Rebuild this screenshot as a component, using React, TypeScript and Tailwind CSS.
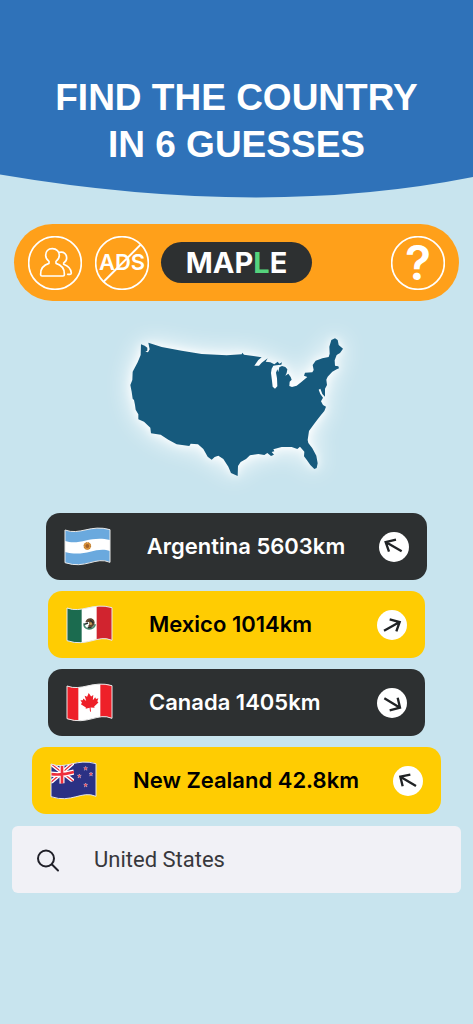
import { useState, type ReactNode } from 'react'

interface Guess {
  country: string
  distance: string
  near: boolean
  flag: ReactNode
  arrow: string
}

const FLAG_SHAPE = 'M3 9 C48 26 80 -9 138 8 V106 C95 87 65 128 3 107 Z'

function Flag({ id, children }: { id: string; children: ReactNode }) {
  return (
    <svg viewBox="0 0 141 117" className="h-[39px] w-[47px] shrink-0" role="img" aria-label={`${id} flag`}>
      <clipPath id={`flag-${id}`}>
        <path d={FLAG_SHAPE} />
      </clipPath>
      <g clipPath={`url(#flag-${id})`}>{children}</g>
      <path d={FLAG_SHAPE} fill="none" stroke="#e8e8e8" strokeWidth="3" strokeLinejoin="round" />
    </svg>
  )
}

function Argentina() {
  return (
    <Flag id="argentina">
      <rect width="141" height="117" fill="#6aa9de" />
      <path d="M0 41 C48 58 80 23 141 40 V73 C95 55 65 94 0 74 Z" fill="#fff" />
      <circle cx="70" cy="57" r="11" fill="#e39a3b" />
      <circle cx="70" cy="57" r="10" fill="none" stroke="#8d5a2b" strokeWidth="2" strokeDasharray="3 3" />
      <circle cx="70" cy="57" r="6" fill="#a2622b" />
    </Flag>
  )
}

function Mexico() {
  return (
    <Flag id="mexico">
      <rect width="141" height="117" fill="#fff" />
      <rect width="47" height="117" fill="#1b6b4f" />
      <rect x="92" width="49" height="117" fill="#d1242f" />
      <path d="M54 55 C53 74 81 79 88 58" fill="none" stroke="#4c8d72" strokeWidth="5" />
      <path d="M58 52 Q62 38 76 40 Q89 45 85 59 Q78 71 65 64 Q73 58 69 51 Z" fill="#5e4632" />
      <path d="M55 58 l11 -4 M72 45 l10 9 M65 68 h12" stroke="#252c2c" strokeWidth="4" />
      <circle cx="74" cy="56" r="4" fill="#c79a54" />
    </Flag>
  )
}

function Canada() {
  return (
    <Flag id="canada">
      <rect width="141" height="117" fill="#fff" />
      <rect width="37" height="117" fill="#ee2029" />
      <rect x="103" width="38" height="117" fill="#ee2029" />
      <path
        transform="rotate(-6 70 57)"
        d="M71 30 L77 41 L84 37 L81 53 L89 45 L91 50 L98 49 L94 57 L97 61 L83 72 L84 76 L72 74 V86 H69 V74 L57 76 L58 72 L44 61 L48 57 L44 49 L51 50 L53 45 L61 53 L58 37 L65 41 Z"
        fill="#ee2029"
      />
    </Flag>
  )
}

function Star({ x, y }: { x: number; y: number }) {
  return (
    <path
      transform={`translate(${x} ${y})`}
      d="M0 -6 L1.5 -2 L6 -2 L2.5 1 L4 6 L0 3 L-4 6 L-2.5 1 L-6 -2 L-1.5 -2 Z"
      fill="#f0303e"
      stroke="#fff"
      strokeWidth="1"
    />
  )
}

function NewZealand() {
  return (
    <Flag id="new-zealand">
      <rect width="141" height="117" fill="#2b3184" />
      <path d="M0 6 L72 62 M0 66 L72 4" stroke="#fff" strokeWidth="12" />
      <path d="M0 6 L72 62 M0 66 L72 4" stroke="#ee2f3c" strokeWidth="4" />
      <path d="M36 6 V68 M0 39 Q36 44 72 33" fill="none" stroke="#fff" strokeWidth="15" />
      <path d="M36 6 V68 M0 39 Q36 44 72 33" fill="none" stroke="#ee2f3c" strokeWidth="8" />
      <path d="M72 0 H141 V117 H0 V66 Q36 74 72 60 Z" fill="#2b3184" />
      <Star x={107} y={22} />
      <Star x={88} y={45} />
      <Star x={123} y={39} />
      <Star x={107} y={72} />
    </Flag>
  )
}

function Ring({ slashed = false }: { slashed?: boolean }) {
  return (
    <svg viewBox="0 0 162 162" className="absolute inset-0 size-full" fill="none" stroke="#fff" aria-hidden="true">
      <circle cx="81" cy="81" r="79" strokeWidth="5" />
      {slashed && <path d="M25 138 L137 26" strokeWidth="6" />}
    </svg>
  )
}

const GUESSES: Guess[] = [
  { country: 'Argentina', distance: '5603km', near: false, flag: <Argentina />, arrow: 'M23 13 L-25 -15 M6 -22 L-25 -15 L-15 14' },
  { country: 'Mexico', distance: '1014km', near: true, flag: <Mexico />, arrow: 'M-24 17 L23 -9 M-7 -17 L23 -9 L13 19' },
  { country: 'Canada', distance: '1405km', near: false, flag: <Canada />, arrow: 'M-23 -14 L24 14 M17 -16 L24 14 L-7 22' },
  { country: 'New Zealand', distance: '42.8km', near: true, flag: <NewZealand />, arrow: 'M24 15 L-23 -13 M7 -19 L-23 -13 L-16 16' },
]

const MAINLAND =
  'M78 58 L89 62 L97 68 L97 77 L91 80 L99 82 L104 73 L100 53 L140 66 L200 77 L260 87 L335 91 L380 88 L382 83 L387 89 L415 93 L440 97 L430 105 L418 122 L432 122 L440 113 L458 100 L452 110 L466 112 L478 118 L488 110 L493 116 L501 112 L499 119 L484 121 L475 122 L470 131 L468 144 L471 168 L473 185 L480 191 L487 184 L486 160 L483 143 L487 133 L490 141 L493 127 L501 123 L511 126 L517 133 L515 144 L511 152 L520 146 L527 156 L530 164 L524 170 L523 183 L531 186 L545 182 L560 170 L577 156 L567 152 L570 143 L592 142 L596 135 L593 120 L602 107 L622 100 L641 96 L644 86 L643 65 L649 45 L660 40 L668 45 L671 60 L684 71 L675 84 L665 90 L659 106 L660 122 L670 124 L672 130 L665 133 L652 140 L638 155 L634 164 L636 180 L630 191 L630 215 L622 207 L616 191 L611 194 L616 207 L624 218 L618 229 L624 240 L633 245 L628 258 L618 270 L608 283 L595 300 L582 318 L578 345 L580 354 L592 370 L604 392 L608 415 L605 429 L598 432 L586 420 L576 406 L567 394 L568 380 L555 365 L547 372 L530 366 L500 366 L475 373 L478 379 L470 381 L477 389 L468 393 L457 384 L448 390 L430 387 L405 391 L393 402 L377 411 L369 423 L368 453 L348 444 L340 425 L325 402 L310 392 L299 396 L290 404 L278 395 L265 372 L249 358 L227 356 L223 363 L185 358 L160 344 L137 329 L108 325 L106 308 L87 290 L70 283 L70 268 L62 254 L60 240 L57 225 L53 221 L50 200 L46 180 L52 165 L53 140 L68 112 L77 90 Z'

export default function App() {
  const [query, setQuery] = useState('United States')

  return (
    <div className="min-h-screen bg-[#c8e4ee] font-['Inter',sans-serif]">
      <header>
        <div className="bg-[#2f72b9] px-4 pt-[74px] pb-1.5">
          <h1 className="text-center font-['Liberation_Sans',sans-serif] text-[37px] leading-[47px] font-bold text-white">
            FIND THE COUNTRY
            <br />
            IN 6 GUESSES
          </h1>
        </div>
        <svg viewBox="0 0 473 24" preserveAspectRatio="none" className="block h-6 w-full" aria-hidden="true">
          <path d="M0 -1 V0.5 Q262 45 473 3 V-1 Z" fill="#2f72b9" />
        </svg>
      </header>

      <main>
        <nav className="mx-3.5 mt-[26px] flex h-[77px] items-center rounded-full bg-[#ffa01a] px-3.5">
          <button aria-label="Players" className="relative size-[54px] shrink-0 rounded-full">
            <Ring />
            <svg viewBox="0 0 162 162" className="size-full" fill="none" stroke="#fff" strokeWidth="5" strokeLinejoin="round" strokeLinecap="round">
              <path d="M73 38 C60 38 53 47 53 58 C53 66 57 72 63 76 V82 C47 87 38 96 38 113 V117 Q38 120 42 120 H105 Q109 120 109 117 V113 C109 96 100 87 84 82 V76 C90 72 94 66 94 58 C94 47 86 38 73 38 Z" />
              <path d="M94 49 C108 46 116 54 116 66 C116 73 112 78 107 81 V85 C120 90 129 98 130 111 Q130 115 126 115 H119" />
            </svg>
          </button>
          <button
            aria-label="Remove ads"
            className="relative ml-[13px] flex size-[54px] shrink-0 items-center justify-center rounded-full text-[22px] font-semibold text-white"
          >
            ADS
            <Ring slashed />
          </button>
          <div className="ml-3 flex h-[41px] w-[151px] items-center justify-center rounded-full bg-[#2d3031] text-[29px] font-bold text-white">
            MAP<span className="text-[#55d37d]">L</span>E
          </div>
          <button
            aria-label="Help"
            className="relative ml-auto flex size-[54px] shrink-0 items-center justify-center rounded-full text-5xl font-semibold text-white"
          >
            ?
            <Ring />
          </button>
        </nav>

        <svg
          viewBox="0 0 729 495"
          className="mx-auto mt-6 block w-[243px] overflow-visible drop-shadow-[0_0_12px_#fff]"
          role="img"
          aria-label="Country outline"
        >
          <path d={MAINLAND} fill="#165a7d" className="drop-shadow-[0_0_12px_#fff]" />
        </svg>

        <ul className="mt-[23px] flex flex-col items-center gap-[11px]">
          {GUESSES.map((guess) => (
            <li
              key={guess.country}
              className={`flex h-[67px] w-fit items-center rounded-[14px] px-[18px] ${
                guess.near ? 'bg-[#ffcc02] text-black' : 'bg-[#2d3031] text-white'
              }`}
            >
              {guess.flag}
              <span className="mr-[34px] ml-9 min-w-[194px] text-[22px] font-semibold whitespace-nowrap">
                {guess.country} {guess.distance}
              </span>
              <svg viewBox="-45 -45 90 90" className="size-[30px] shrink-0" aria-hidden="true">
                <circle r="45" fill="#fff" />
                <path d={guess.arrow} fill="none" stroke="#202325" strokeWidth="7" />
              </svg>
            </li>
          ))}
        </ul>

        <div className="mx-3 mt-3 flex h-[67px] items-center rounded-md bg-[#f1f1f6] pl-6">
          <label htmlFor="country" aria-label="Country" className="shrink-0">
            <svg viewBox="0 0 24 24" className="size-6" fill="none" stroke="#202028" strokeWidth="2" strokeLinecap="round">
              <circle cx="10" cy="10.5" r="8" />
              <path d="M16 16.5 L22 22.5" />
            </svg>
          </label>
          <input
            id="country"
            type="text"
            value={query}
            onChange={(e) => setQuery(e.target.value)}
            className="ml-[34px] min-w-0 flex-1 bg-transparent font-['Roboto',sans-serif] text-[22px] text-[#38383c] outline-none"
          />
        </div>
      </main>
    </div>
  )
}
